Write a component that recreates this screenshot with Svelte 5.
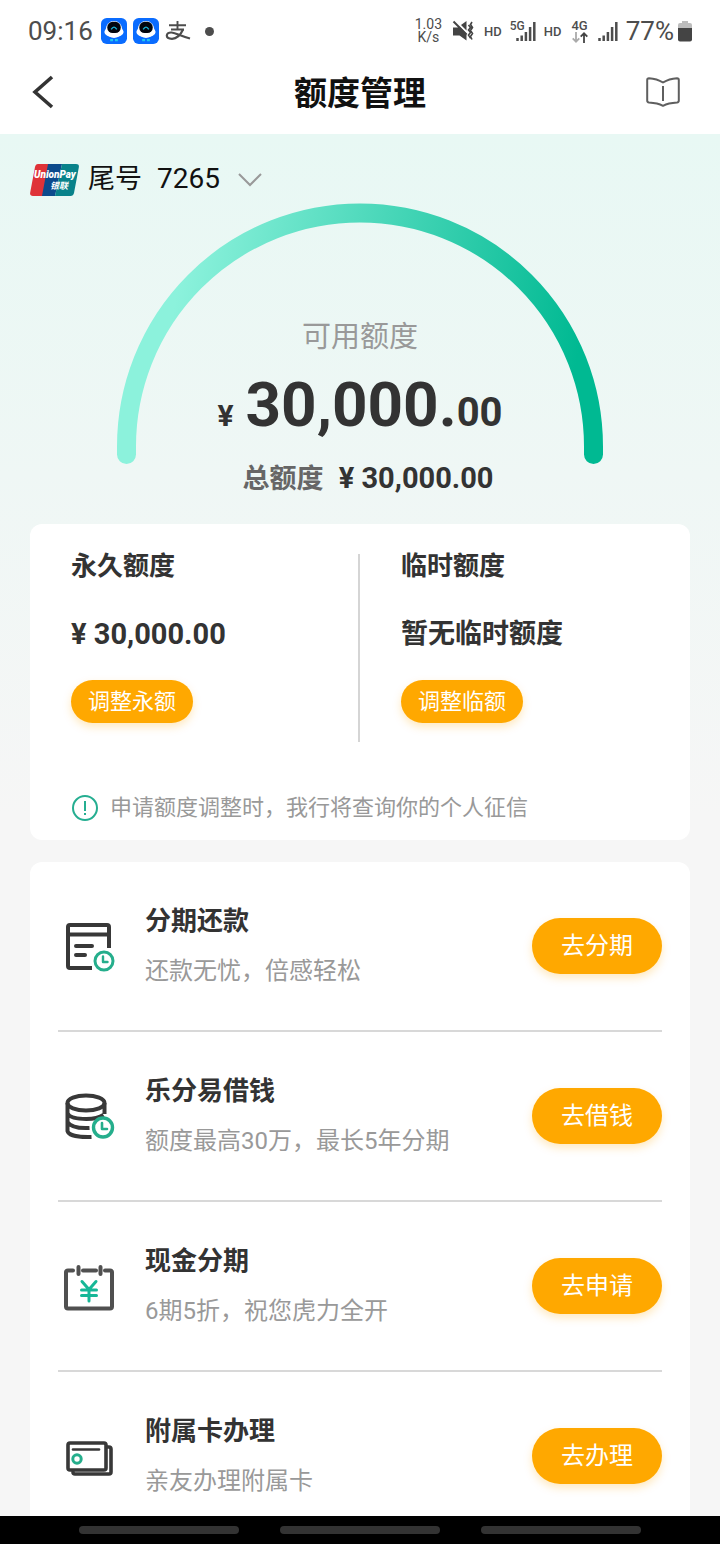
<script>
  const limits = [
    { title: '永久额度', value: '¥ 30,000.00', action: '调整永额', money: true },
    { title: '临时额度', value: '暂无临时额度', action: '调整临额', money: false }
  ];
  const services = [
    { icon: 'bill', title: '分期还款', note: '还款无忧，倍感轻松', action: '去分期' },
    { icon: 'coins', title: '乐分易借钱', note: '额度最高30万，最长5年分期', action: '去借钱' },
    { icon: 'cash', title: '现金分期', note: '6期5折，祝您虎力全开', action: '去申请' },
    { icon: 'cards', title: '附属卡办理', note: '亲友办理附属卡', action: '去办理' }
  ];
</script>

{#snippet bot()}
  <svg width="26" height="26" viewBox="0 0 27 27" aria-hidden="true">
    <rect width="27" height="27" rx="6" fill="#0a6cff" />
    <ellipse cx="13.5" cy="14.500" rx="10" ry="5.500" fill="#fff" />
    <ellipse cx="13.5" cy="12" rx="8.6" ry="8.800" fill="#fff" />
    <rect x="6.500" y="4" width="14" height="11.600" rx="5.600" fill="#02060d" />
    <path d="M10.600 11.800q2.900-4.600 5.800 0" fill="none" stroke="#19b5d8" stroke-width="1.500" />
    <path d="M9.500 23h3M14.500 23h3" stroke="#21c8ee" stroke-width="2.400" />
  </svg>
{/snippet}

{#snippet signal()}
  <svg width="20" height="20" viewBox="0 0 20 20" aria-hidden="true">
    <path d="M1.500 20v-3M5.700 20v-5.500M9.900 20v-9M14.100 20v-14M18.300 20v-19" stroke="#4d4d4d" stroke-width="2.500" />
  </svg>
{/snippet}

<div class="screen">
  <div class="status">
    <div class="group left">
      <span class="clock">09:16</span>
      {@render bot()}
      {@render bot()}
      <svg width="26" height="20" viewBox="0 0 26 20" fill="none" stroke="#4d4d4d" aria-hidden="true">
        <path d="M4 4.300h17M12.500 0v8.500M6 8.500h13" stroke-width="1.900" />
        <path d="M18 8.500c-2.400 5.400-6 9.300-11 9.300-3.400 0-5.200-1.200-5.200-3.200 0-2.200 2.100-3.300 4.800-3.100 4.500.4 8.500 3.300 18.400 6" stroke-width="2.200" />
      </svg>
      <i class="dot"></i>
    </div>
    <div class="group right">
      <span class="speed">1.03<br />K/s</span>
      <svg class="mute" width="22" height="22" viewBox="0 0 22 22" aria-hidden="true">
        <path d="M1 7.500h4.500l2-1 7 7V20.500l-7-5H1z" fill="#444" />
        <path d="M9 5l5.500-4v9.500z" fill="#444" />
        <path d="M1.500 1.500l13 13" stroke="#444" stroke-width="2" />
        <path d="M16.500 5l2 2.500-2 2.500 2 2.500-2 2.500 2 3M20 2l-1.500 2.500 2 3-2 3 2 3-2 3 1.500 3" fill="none" stroke="#444" stroke-width="1.600" />
      </svg>
      <span class="hd">HD</span>
      <span class="net"><b>5G</b>{@render signal()}</span>
      <span class="hd">HD</span>
      <span class="four"><b>4G</b>
        <svg width="16" height="11" viewBox="0 0 16 11" fill="none" stroke-width="1.800" aria-hidden="true">
          <path d="M4 0v9.500M.7 6.300L4 9.700l3.300-3.400" stroke="#aaa" />
          <path d="M12 11V1.500M8.700 4.700L12 1.300l3.300 3.400" stroke="#444" />
        </svg>
      </span>
      {@render signal()}
      <span class="clock">77%</span>
      <svg class="battery" width="14" height="21" viewBox="0 0 14 21" aria-hidden="true">
        <path d="M4 0h6v2h2a2 2 0 0 1 2 2v4H0V4a2 2 0 0 1 2-2h2z" fill="#bdbdbd" />
        <path d="M0 7h14v11.500a2 2 0 0 1-2 2H2a2 2 0 0 1-2-2z" fill="#444" />
      </svg>
    </div>
  </div>

  <header>
    <button class="plain" aria-label="返回">
      <svg width="22" height="34" viewBox="0 0 22 34" aria-hidden="true"><path d="M20 2L3 17l17 15" fill="none" stroke="#333" stroke-width="3.600" /></svg>
    </button>
    <h1>额度管理</h1>
    <button class="plain" aria-label="说明">
      <svg width="34" height="30" viewBox="0 0 34 30" fill="none" stroke="#5f5f5f" stroke-width="2" stroke-linejoin="round" aria-hidden="true">
        <path d="M17 5.500C13 3 8 1.500 3 1.200Q1.200 1.200 1.200 3v20.500q0 1.800 1.800 2c5 .3 10 1.200 14 3.300 4-2.100 9-3 14-3.300q1.800-.2 1.800-2V3q0-1.800-1.800-1.800C26 1.500 21 3 17 5.500z" />
        <path d="M17 9v15" />
      </svg>
    </button>
  </header>

  <main>
    <button class="plain account">
      <svg width="49" height="32" viewBox="0 0 49 32" aria-hidden="true">
        <path d="M8 0h13l-7 32H3q-3.500 0-2.800-3.500L5 3q.7-3 3-3z" fill="#df3238" />
        <path d="M18 0h14l-7 32H12z" fill="#0c4a8c" />
        <path d="M32 0h14q3.500 0 2.800 3.500L44 29q-.7 3-3.500 3H25z" fill="#08828a" />
        <text x="4" y="14" class="union">UnionPay</text>
        <text x="20" y="25" class="union cn">银联</text>
      </svg>
      <span class="tail">尾号</span>
      <span class="digits">7265</span>
      <svg class="chevron" width="24" height="14" viewBox="0 0 24 14" aria-hidden="true"><path d="M1 1l11 11L23 1" fill="none" stroke="#999" stroke-width="2" /></svg>
    </button>

    <section class="gauge">
      <svg width="486" height="261" viewBox="0 0 486 261" aria-hidden="true">
        <defs>
          <linearGradient id="arc" gradientUnits="userSpaceOnUse" x1="40" y1="200" x2="440" y2="270">
            <stop offset="0" stop-color="#8cf2dc" />
            <stop offset="1" stop-color="#00b992" />
          </linearGradient>
        </defs>
        <path d="M9.500 251.500v-8a233.500 233.500 0 0 1 467 0v8" fill="none" stroke="url(#arc)" stroke-width="19" stroke-linecap="round" />
      </svg>
      <div class="figures">
        <p class="label">可用额度</p>
        <p class="amount"><small>¥</small>30,000.<em>00</em></p>
        <p class="total"><span>总额度</span> ¥ 30,000.00</p>
      </div>
    </section>

    <section class="card limits">
      <div class="columns">
        {#each limits as limit}
          <div class="limit">
            <h2>{limit.title}</h2>
            <p class:money={limit.money}>{limit.value}</p>
            <button class="pill small">{limit.action}</button>
          </div>
        {/each}
      </div>
      <p class="notice">
        <svg width="28" height="28" viewBox="0 0 28 28" fill="none" stroke="#25ae91" aria-hidden="true">
          <circle cx="14" cy="14" r="12" stroke-width="2" />
          <path d="M14 7v10M14 19v2" stroke-width="2" />
        </svg>
        申请额度调整时，我行将查询你的个人征信
      </p>
    </section>

    <ul class="card services">
      {#each services as item}
        <li>
          <svg class="icon" width="60" height="60" viewBox="0 0 60 60" fill="none" stroke="#383838" stroke-width="4" stroke-linecap="round" stroke-linejoin="round" aria-hidden="true">
            {#if item.icon === 'bill'}
              <path d="M34 52H12q-2 0-2-2V11q0-2 2-2h37q2 0 2 2v21M10 18.500h41" stroke-linecap="butt" />
              <path d="M18 30h16M18 39h9" />
              <circle cx="46" cy="45" r="9" stroke="#25ae8c" stroke-width="3" />
              <path d="M45 40.500v5.500h4.500" stroke="#25ae8c" stroke-width="2.400" />
            {:else if item.icon === 'coins'}
              <g stroke-linecap="butt">
                <ellipse cx="28" cy="17" rx="18.500" ry="7.500" />
                <path d="M9.500 17v28c1 4 10 6.500 24 6M46.500 17v11M9.500 27c2 7 27 8 36 2M9.500 36c3 5 12 6.500 22 6" />
              </g>
              <circle cx="45" cy="41.500" r="9.500" stroke="#25ae8c" stroke-width="3.400" />
              <path d="M44 37v6h5" stroke="#25ae8c" stroke-width="2.600" />
            {:else if item.icon === 'cash'}
              <g stroke="#505050">
                <path d="M15 14.500H10q-2 0-2 2v34q0 2 2 2h42q2 0 2-2V16.500q0-2-2-2h-5M25 14.500h13" />
                <path d="M20.500 11v7M42.500 11v7" />
              </g>
              <path d="M24 25.500l7 8 7-8M23.500 34h15M23.500 39.500h15M31 34v11" stroke="#16b797" stroke-width="3" />
            {:else}
              <g stroke-width="3.600">
                <path d="M12 17h34q2 0 2 2V42q0 2-2 2H12q-2 0-2-2V19q0-2 2-2z" />
                <path d="M49 21h2q2 0 2 2v23q0 2-2 2H17q-2 0-2-2" />
                <path d="M15 23.500h26" stroke-width="2.600" />
              </g>
              <circle cx="19" cy="33" r="4.200" stroke="#25ae8c" stroke-width="3" />
            {/if}
          </svg>
          <div class="text">
            <h2>{item.title}</h2>
            <p>{item.note}</p>
          </div>
          <button class="pill">{item.action}</button>
        </li>
      {/each}
    </ul>
  </main>

  <div class="navbar"><i></i><i></i><i></i></div>
</div>

<style>
  :global(body) {
    margin: 0;
    background: #f5f5f5;
  }
  .screen {
    height: 100vh;
    display: flex;
    flex-direction: column;
    font-family: Roboto, "Noto Sans CJK SC", sans-serif;
    color: #333;
  }
  h1, h2, p, ul {
    margin: 0;
    padding: 0;
  }
  button {
    font-family: inherit;
    border: 0;
    cursor: pointer;
  }
  svg {
    display: block;
    flex: none;
  }
  .plain {
    background: none;
    padding: 0;
    color: #111;
  }
  .status {
    display: flex;
    justify-content: space-between;
    align-items: center;
    height: 62px;
    flex: none;
    padding: 0 28px;
    background: #fff;
    color: #4d4d4d;
  }
  .group {
    display: flex;
    align-items: center;
  }
  .left {
    gap: 6px;
  }
  .clock {
    font-size: 26px;
    line-height: 30px;
  }
  .left .clock {
    margin-right: 2px;
  }
  .dot {
    width: 9px;
    height: 9px;
    margin-left: 8px;
    border-radius: 50%;
    background: #4d4d4d;
  }
  .right {
    gap: 8px;
  }
  .speed {
    font-size: 14px;
    line-height: 13px;
    text-align: center;
  }
  .mute {
    margin: 0 2px;
  }
  .hd {
    font-size: 13px;
    font-weight: 500;
  }
  .net {
    display: flex;
    align-items: flex-end;
  }
  .net b {
    align-self: flex-start;
    margin-right: -9px;
    font-size: 12px;
    line-height: 10px;
    font-weight: 500;
  }
  .four {
    display: flex;
    flex-direction: column;
    align-items: center;
    margin: 0 2px;
    font-size: 13px;
    line-height: 12px;
  }
  .four b {
    font-weight: 500;
  }
  .battery {
    margin-left: -4px;
  }
  header {
    display: grid;
    grid-template-columns: 1fr auto 1fr;
    align-items: center;
    height: 72px;
    flex: none;
    box-sizing: border-box;
    padding: 0 40px 12px;
    background: #fff;
  }
  header .plain:first-child {
    margin-left: -8px;
  }
  header .plain:last-child {
    justify-self: end;
  }
  h1 {
    padding-top: 4px;
    font-size: 33px;
    line-height: 44px;
    color: #111;
  }
  main {
    flex: 1;
    min-height: 0;
    overflow-y: auto;
    scrollbar-width: none;
    padding: 0 30px;
    background: linear-gradient(#e8f8f4, #f6f6f6 680px);
  }
  .account {
    display: flex;
    align-items: center;
    height: 69px;
    padding-top: 22px;
    box-sizing: border-box;
    gap: 9px;
  }
  .account span {
    line-height: 32px;
    padding-bottom: 2px;
  }
  .tail {
    font-size: 27px;
  }
  .digits {
    font-size: 28px;
    margin-left: 6px;
  }
  .chevron {
    margin-left: 9px;
  }
  .union {
    font: italic 900 10px Roboto, sans-serif;
    fill: #fff;
  }
  .cn {
    font: italic 700 9px "Noto Sans CJK SC", sans-serif;
  }
  .gauge {
    display: grid;
    justify-items: center;
    height: 321px;
  }
  .gauge > * {
    grid-area: 1 / 1;
  }
  .figures {
    display: flex;
    flex-direction: column;
    align-items: center;
    padding-top: 112px;
    font-weight: 700;
  }
  .label {
    font-size: 29px;
    line-height: 44px;
    font-weight: 400;
    color: #999;
  }
  .amount {
    font-size: 62px;
    line-height: 92px;
  }
  .amount small {
    margin-right: 12px;
    font-size: 30px;
  }
  .amount em {
    font-size: 40px;
    font-style: normal;
  }
  .total {
    margin-top: -8px;
    padding-left: 16px;
    font-size: 29px;
    line-height: 48px;
  }
  .total span {
    margin-right: 8px;
    font-size: 27px;
    color: #666;
  }
  .card {
    background: #fff;
    border-radius: 12px;
  }
  .limits {
    padding: 30px 0 14px;
    margin-bottom: 22px;
  }
  .columns {
    display: grid;
    grid-template-columns: calc(50% - 2px) 1fr;
    height: 188px;
  }
  .limit {
    padding-left: 41px;
  }
  .limit + .limit {
    border-left: 2px solid #d5d5d5;
  }
  h2 {
    font-size: 26px;
    line-height: 36px;
  }
  .limit h2 {
    margin-top: -6px;
  }
  .limit p {
    margin: 30px 0 26px;
    font-size: 27px;
    line-height: 40px;
    font-weight: 700;
  }
  .limit .money {
    font-size: 29px;
  }
  .pill {
    height: 56px;
    width: 130px;
    padding: 0 0 6px;
    border-radius: 28px;
    background: #ffa800;
    color: #fff;
    font-size: 24px;
    box-shadow: 0 4px 8px #ffa80040;
  }
  .small {
    width: 122px;
    height: 43px;
    font-size: 22px;
  }
  .notice {
    display: flex;
    align-items: center;
    gap: 11px;
    margin-top: 48px;
    padding-left: 41px;
    font-size: 22px;
    line-height: 36px;
    color: #999;
  }
  .services {
    list-style: none;
    padding: 0 28px;
  }
  .services li {
    display: flex;
    align-items: center;
    height: 170px;
    box-sizing: border-box;
    border-bottom: 2px solid #d8d8d8;
  }
  .text {
    flex: 1;
    padding-left: 27px;
  }
  .text p {
    margin-top: 14px;
    font-size: 24px;
    line-height: 36px;
    color: #999;
  }
  .navbar {
    display: flex;
    justify-content: center;
    align-items: center;
    gap: 41px;
    height: 28px;
    flex: none;
    background: #000;
  }
  .navbar i {
    width: 160px;
    height: 8px;
    border-radius: 4px;
    background: #333;
  }
</style>
